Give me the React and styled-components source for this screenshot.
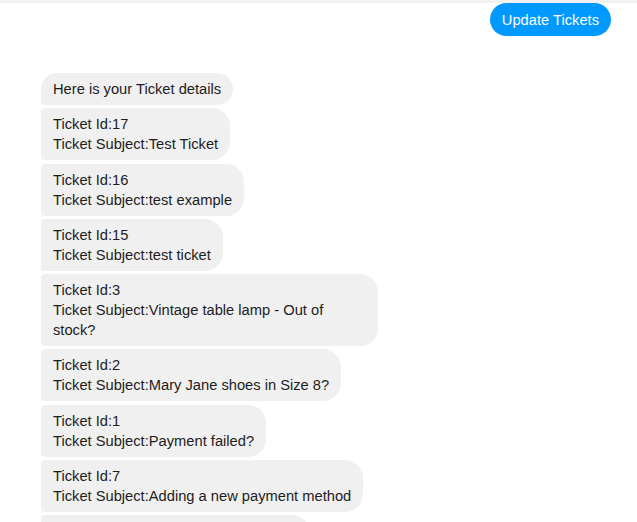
import React from 'react';
import styled, { createGlobalStyle } from 'styled-components';

const GlobalStyle = createGlobalStyle`
  html, body {
    margin: 0;
    padding: 0;
    background: #fff;
    overflow: hidden;
  }
  body {
    font-family: "Liberation Sans", Arial, sans-serif;
  }
`;

const Page = styled.div`
  width: 637px;
  height: 522px;
  border-top: 3px solid #f2f2f2;
  box-sizing: border-box;
  overflow: hidden;
`;

const TopBar = styled.div`
  display: flex;
  justify-content: flex-end;
  padding: 0 26px 0 0;
`;

const UpdateButton = styled.button`
  height: 33px;
  padding: 0 12px;
  border: none;
  border-radius: 17px;
  background: #0099ff;
  color: #fff;
  font-family: "Liberation Sans", Arial, sans-serif;
  font-size: 14.7px;
  cursor: pointer;
`;

const Thread = styled.div`
  display: flex;
  flex-direction: column;
  align-items: flex-start;
  gap: 3.3px;
  padding: 37px 0 0 41px;
`;

const radius = pos => {
  if (pos === 'first') return '18px 18px 18px 4px';
  if (pos === 'last') return '4px 18px 18px 18px';
  return '4px 18px 18px 4px';
};

const Bubble = styled.div`
  max-width: 313px;
  padding: 6px 12px;
  border-radius: ${props => radius(props.pos)};
  background: #f0f0f0;
  color: #1d1d1d;
  font-size: 14.7px;
  line-height: 20px;
`;

const tickets = [
  { id: 17, subject: 'Test Ticket' },
  { id: 16, subject: 'test example' },
  { id: 15, subject: 'test ticket' },
  { id: 3, subject: 'Vintage table lamp - Out of stock?' },
  { id: 2, subject: 'Mary Jane shoes in Size 8?' },
  { id: 1, subject: 'Payment failed?' },
  { id: 7, subject: 'Adding a new payment method' },
  { id: 6, subject: 'Order not yet shipped?' }
];

const App = () => (
  <Page>
    <GlobalStyle />
    <TopBar>
      <UpdateButton>Update Tickets</UpdateButton>
    </TopBar>
    <Thread>
      <Bubble pos="first">Here is your Ticket details</Bubble>
      {tickets.map((t, i) => (
        <Bubble key={t.id} pos={i === tickets.length - 1 ? 'last' : 'middle'}>
          Ticket Id:{t.id}
          <br />
          Ticket Subject:{t.subject}
        </Bubble>
      ))}
    </Thread>
  </Page>
);

export default App;
